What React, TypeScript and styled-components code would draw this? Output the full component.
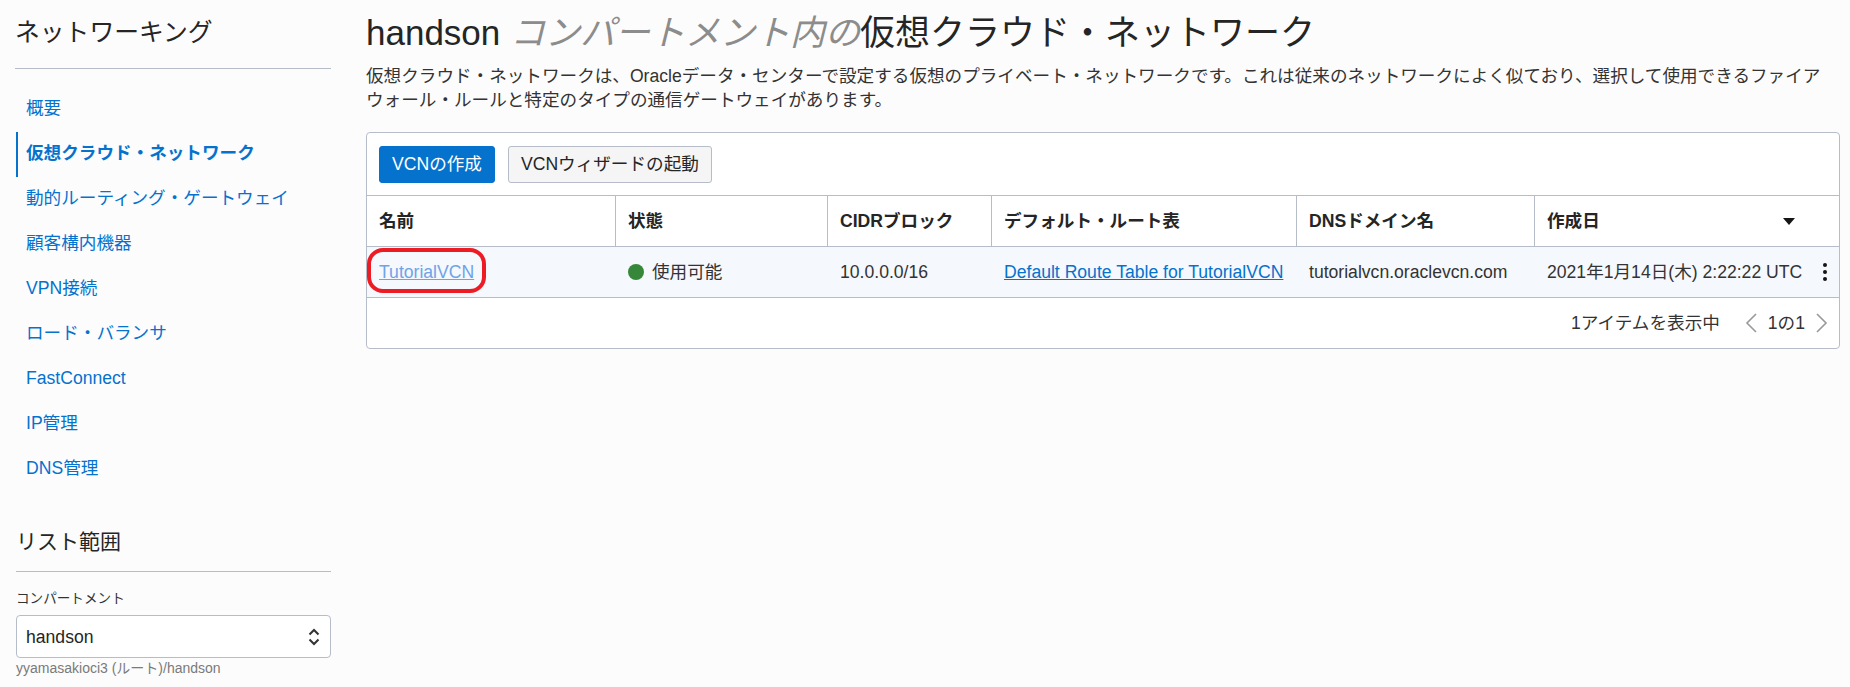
import React from "react";
import styled, { createGlobalStyle } from "styled-components";

const Global = createGlobalStyle`
  html, body { margin: 0; padding: 0; background: #fcfcfc; }
  body { font-family: "Liberation Sans", "Noto Sans CJK JP", sans-serif; color: #252525; }
  * { box-sizing: border-box; }
`;
const Page = styled.div`
  display: flex; width: 1850px; height: 687px; overflow: hidden; background: #fcfcfc;
`;
const Sidebar = styled.aside`
  width: 315px; margin-left: 16px; flex: none; display: flex; flex-direction: column;
`;
const SideTitle = styled.h2`
  margin: 0 0 0 -1px; padding-top: 17px; height: 69px; font-size: 24.8px; line-height: 32px; font-weight: 400;
  border-bottom: 1px solid #b6bcc8; color: #252525;
`;
const Nav = styled.nav`
  display: flex; flex-direction: column; margin-top: 18px;
`;
const NavItem = styled.a<{ $active?: boolean }>`
  display: flex; align-items: center; height: 45px; padding-left: 8px; padding-bottom: 3px; font-size: 17.6px; line-height: 20px;
  color: #0572ce; font-weight: ${p => (p.$active ? 700 : 400)};
  border-left: 2px solid ${p => (p.$active ? "#0572ce" : "transparent")};
`;
const ScopeTitle = styled.h3`
  margin: 34px 0 0; height: 46px; font-size: 21px; line-height: 32px; font-weight: 400;
  border-bottom: 1px solid #b6bcc8; color: #252525;
`;
const FieldLabel = styled.div`
  margin-top: 18px; font-size: 13.6px; line-height: 18px; color: #333;
`;
const SelectBox = styled.div`
  margin-top: 7px; height: 43px; border: 1px solid #b6bcc8; border-radius: 4px; background: #fff;
  display: flex; align-items: center; justify-content: space-between; padding: 1px 10px 0 9px;
  font-size: 17.6px; color: #252525;
`;
const Hint = styled.div`
  margin-top: 1px; font-size: 14px; line-height: 18px; color: #7a7a7a;
`;
const Main = styled.main`
  width: 1474px; margin-left: 35px; flex: none; display: flex; flex-direction: column;
`;
const Title = styled.h1`
  margin: 0; padding-top: 11px; font-size: 35px; line-height: 44px; font-weight: 400; color: #252525; white-space: nowrap;
`;
const TitleEm = styled.em`
  color: #8c8c8c; font-style: italic;
`;
const Description = styled.p`
  margin: 8.5px 0 0; font-size: 17.6px; line-height: 24.5px; color: #333; width: 1465px;
`;
const Card = styled.section`
  margin-top: 19.5px; height: 217px; border: 1px solid #b6bcc8; border-radius: 4px; background: #fff;
  display: flex; flex-direction: column;
`;
const Toolbar = styled.div`
  height: 63px; flex: none; display: flex; align-items: center; gap: 13px; padding-left: 12px; border-bottom: 1px solid #b6bcc8;
`;
const Button = styled.button<{ $primary?: boolean }>`
  height: 37px; padding: 0 12px; font: inherit; font-size: 17.6px; line-height: 20px; border-radius: 3px;
  background: ${p => (p.$primary ? "#0572ce" : "#f5f5f5")};
  color: ${p => (p.$primary ? "#fff" : "#252525")};
  border: 1px solid ${p => (p.$primary ? "#0572ce" : "#b6bcc8")};
`;
const GridRow = styled.div<{ $alt?: boolean }>`
  display: grid; grid-template-columns: 249px 212px 164px 305px 238px 1fr; height: 51px; flex: none;
  background: ${p => (p.$alt ? "#f5f8fc" : "#fff")};
  border-bottom: 1px solid #b6bcc8;
`;
const HeadCell = styled.div`
  display: flex; align-items: center; justify-content: space-between; padding: 0 8px 0 12px; font-size: 17.6px; line-height: 20px; font-weight: 700; color: #252525; white-space: nowrap;
  border-right: 1px solid #b6bcc8;
  &:last-child { border-right: 0; }
`;
const Cell = styled.div`
  display: flex; align-items: center; padding-left: 12px; font-size: 17.6px; line-height: 20px; color: #333; white-space: nowrap; position: relative;
`;
const NameLink = styled.a`
  color: #6fa3e8; text-decoration: underline;
`;
const RouteLink = styled.a`
  color: #0572ce; text-decoration: underline;
`;
const Dot = styled.span`
  width: 16px; height: 16px; border-radius: 50%; background: #36873a; margin-right: 8px; flex: none;
`;
const Highlight = styled.span`
  position: absolute; left: 0; top: 1px; width: 119px; height: 45px;
  border: 4px solid #ed1c24; border-radius: 16px; pointer-events: none;
`;
const SortCaret = styled.span`
  width: 0; height: 0; margin-right: 36px; border-left: 6px solid transparent; border-right: 6px solid transparent; border-top: 7px solid #161513;
`;
const KebabButton = styled.span`
  position: absolute; right: 12px; top: 50%; transform: translateY(-50%); display: flex; flex-direction: column; gap: 3px;
`;
const KebabDot = styled.span`
  width: 4px; height: 4px; border-radius: 50%; background: #161513;
`;
const Footer = styled.div`
  flex: 1; display: flex; align-items: center; justify-content: flex-end; padding-right: 11px; font-size: 17.6px; line-height: 20px; color: #333;
`;
const Pager = styled.div`
  display: flex; align-items: center; margin-left: 25px; gap: 11px;
`;

const Chevron = ({ dir }: { dir: "l" | "r" }) => (
  <svg width="12" height="20" viewBox="0 0 12 20" fill="none" stroke="#999" strokeWidth="1.6">
    <path d={dir === "l" ? "M11 1 2 10l9 9" : "M1 1l9 9-9 9"} />
  </svg>
);

const UpDown = () => (
  <svg width="12" height="18" viewBox="0 0 12 18" fill="none" stroke="#333" strokeWidth="2">
    <path d="M1.5 6.5 6 2l4.5 4.5M1.5 11.5 6 16l4.5-4.5" />
  </svg>
);

const nav = ["概要", "仮想クラウド・ネットワーク", "動的ルーティング・ゲートウェイ", "顧客構内機器", "VPN接続", "ロード・バランサ", "FastConnect", "IP管理", "DNS管理"];
const heads = ["名前", "状態", "CIDRブロック", "デフォルト・ルート表", "DNSドメイン名"];

export default function App() {
  return (
    <Page>
      <Global />
      <Sidebar>
        <SideTitle>ネットワーキング</SideTitle>
        <Nav>
          {nav.map(n => (
            <NavItem key={n} $active={n === "仮想クラウド・ネットワーク"}>{n}</NavItem>
          ))}
        </Nav>
        <ScopeTitle>リスト範囲</ScopeTitle>
        <FieldLabel>コンパートメント</FieldLabel>
        <SelectBox>handson<UpDown /></SelectBox>
        <Hint>yyamasakioci3 (ルート)/handson</Hint>
      </Sidebar>
      <Main>
        <Title>handson <TitleEm>コンパートメント内の</TitleEm>仮想クラウド・ネットワーク</Title>
        <Description>
          仮想クラウド・ネットワークは、Oracleデータ・センターで設定する仮想のプライベート・ネットワークです。これは従来のネットワークによく似ており、選択して使用できるファイアウォール・ルールと特定のタイプの通信ゲートウェイがあります。
        </Description>
        <Card>
          <Toolbar>
            <Button $primary>VCNの作成</Button>
            <Button>VCNウィザードの起動</Button>
          </Toolbar>
          <GridRow>
            {heads.map(h => <HeadCell key={h}>{h}</HeadCell>)}
            <HeadCell>作成日<SortCaret /></HeadCell>
          </GridRow>
          <GridRow $alt>
            <Cell><NameLink>TutorialVCN</NameLink><Highlight /></Cell>
            <Cell><Dot />使用可能</Cell>
            <Cell>10.0.0.0/16</Cell>
            <Cell><RouteLink>Default Route Table for TutorialVCN</RouteLink></Cell>
            <Cell>tutorialvcn.oraclevcn.com</Cell>
            <Cell>2021年1月14日(木) 2:22:22 UTC<KebabButton><KebabDot /><KebabDot /><KebabDot /></KebabButton></Cell>
          </GridRow>
          <Footer>
            1アイテムを表示中
            <Pager><Chevron dir="l" />1の1<Chevron dir="r" /></Pager>
          </Footer>
        </Card>
      </Main>
    </Page>
  );
}
